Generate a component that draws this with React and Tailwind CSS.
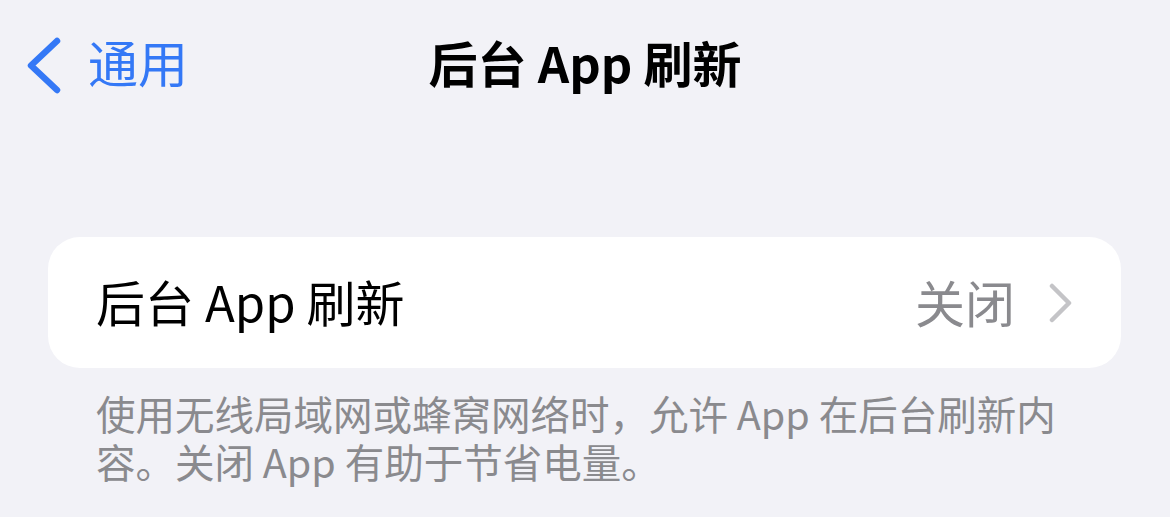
const font = { fontFamily: '"Noto Sans CJK SC", "Noto Sans", sans-serif' };

function BackChevron() {
  return (
    <svg width="34" height="58" viewBox="0 0 34 58" className="text-[#3478f6]">
      <path d="M30 4 L4 28.5 L30 53" fill="none" stroke="currentColor" strokeWidth="6.5" strokeLinecap="round" strokeLinejoin="round" />
    </svg>
  );
}

function Disclosure() {
  return (
    <svg width="24" height="40" viewBox="0 0 24 40" className="text-[#c4c4c7]">
      <path d="M3 3 L20 20 L3 37" fill="none" stroke="currentColor" strokeWidth="4.5" strokeLinecap="round" strokeLinejoin="round" />
    </svg>
  );
}

export default function App() {
  return (
    <div className="w-[1170px] h-[517px] bg-[#f2f2f7] overflow-hidden" style={font}>
      {/* nav bar */}
      <div className="relative h-[134px] flex items-start">
        <div className="flex items-center h-[58px] mt-[37px] pl-[27px] text-[#3478f6]">
          <BackChevron />
          <span className="ml-[27px] text-[50px] leading-none mt-[-10px]">通用</span>
        </div>
        <div className="absolute left-0 right-0 top-[33px] h-[56px] flex items-center justify-center">
          <span className="text-[49px] leading-none font-bold text-black">后台 App 刷新</span>
        </div>
      </div>

      {/* settings group */}
      <div className="mt-[103px] mx-[48px] w-[1073px] h-[131px] bg-white rounded-[32px] flex items-center pl-[48px] pr-[48px]">
        <span className="text-[49px] leading-none text-black mt-[-4px]">后台 App 刷新</span>
        <div className="ml-auto flex items-center">
          <span className="text-[50px] leading-none text-[#8a8a8e] mt-[-4px]">关闭</span>
          <div className="ml-[34px]">
            <Disclosure />
          </div>
        </div>
      </div>

      {/* footer */}
      <div className="mt-[21px] pl-[96px] text-[39.5px] leading-[48px] text-[#8a8a8e] whitespace-nowrap">
        <div>使用无线局域网或蜂窝网络时，允许 App 在后台刷新内</div>
        <div>容。关闭 App 有助于节省电量。</div>
      </div>
    </div>
  );
}
